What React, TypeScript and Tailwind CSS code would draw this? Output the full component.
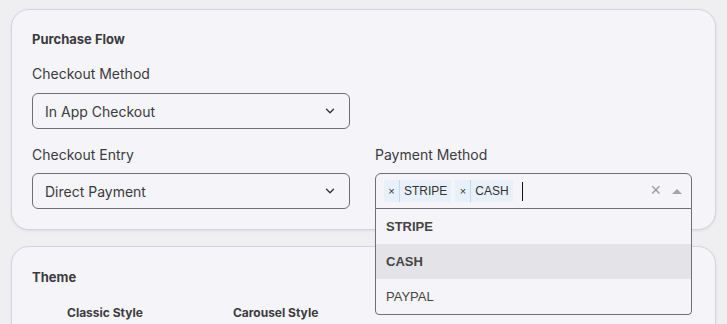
import React from "react";
import { ChevronDown } from "lucide-react";

const font = { fontFamily: "Inter, 'Noto Sans', sans-serif" };

function Select({ value }: { value: string }) {
	return (
		<div className="flex h-[36px] items-center justify-between rounded-[6px] border border-[#6f6e73] px-[12px] text-[14px] text-[#3b3b3f]">
			<span>{value}</span>
			<ChevronDown size={14} strokeWidth={2.2} className="text-[#333]" />
		</div>
	);
}

function Chip({ label }: { label: string }) {
	return (
		<div className="flex h-[22px] items-stretch bg-[#e8f1fa] text-[12px] text-[#333]">
			<span className="flex w-[16px] items-center justify-center border-r border-[#c2daf0] text-[11px]">×</span>
			<span className="flex items-center px-[4px]">{label}</span>
		</div>
	);
}

function PaymentSelect() {
	const options = [
		{ label: "STRIPE", bold: true, active: false },
		{ label: "CASH", bold: true, active: true },
		{ label: "PAYPAL", bold: false, active: false },
	];
	return (
		<div className="relative" style={{ fontFamily: "'Liberation Sans', Arial, sans-serif" }}>
			<div className="flex h-[36px] items-center rounded-t-[6px] border border-[#6f6e73] pl-[8px] pr-[9px]">
				<div className="flex items-center gap-[4px]">
					<Chip label="STRIPE" />
					<Chip label="CASH" />
				</div>
				<span className="ml-[9px] h-[19px] w-px bg-[#111]" />
				<span className="ml-auto -mt-[3px] text-[18px] leading-none text-[#9a9a9e]">×</span>
				<span className="ml-[11px] h-0 w-0 border-x-[5px] border-b-[5px] border-x-transparent border-b-[#a5a5a9]" />
			</div>
			<div className="absolute left-0 right-0 top-[35px] z-10 rounded-b-[4px] border border-[#6f6e73] bg-[#f5f4f8]">
				{options.map((o) => (
					<div
						key={o.label}
						className={`flex h-[35px] items-center px-[10px] text-[13px] text-[#444] ${o.bold ? "font-bold" : ""} ${o.active ? "bg-[#e4e3e7]" : ""}`}
					>
						{o.label}
					</div>
				))}
			</div>
		</div>
	);
}

export default function App() {
	return (
		<div className="h-screen overflow-hidden bg-[#efeef0] px-[11px] pt-[9px]" style={font}>
			{/* Purchase flow */}
			<div className="rounded-[18px] border border-[#d5d4d8] bg-[#f5f4f8] px-5 pt-[19px] pb-[20px] shadow-[0_1px_3px_rgba(0,0,0,0.08)]">
				<h2 className="text-[13px] leading-5 font-bold text-[#3b3b3f]">Purchase Flow</h2>
				<div className="mt-[15px] text-[14px] leading-5 text-[#3b3b3f]">Checkout Method</div>
				<div className="mt-[9px] w-[318px]">
					<Select value="In App Checkout" />
				</div>
				<div className="mt-[16px] grid grid-cols-[318px_317px] gap-x-[25px]">
					<div>
						<div className="text-[14px] leading-5 text-[#3b3b3f]">Checkout Entry</div>
						<div className="mt-[8px]">
							<Select value="Direct Payment" />
						</div>
					</div>
					<div>
						<div className="text-[14px] leading-5 text-[#3b3b3f]">Payment Method</div>
						<div className="mt-[8px]">
							<PaymentSelect />
						</div>
					</div>
				</div>
			</div>

			{/* Theme */}
			<div className="mt-[16px] h-[120px] rounded-[18px] border border-[#d5d4d8] bg-[#f5f4f8] px-5 pt-[20px] shadow-[0_1px_3px_rgba(0,0,0,0.08)]">
				<h2 className="text-[13px] leading-5 font-bold text-[#3b3b3f]">Theme</h2>
				<div className="mt-[16px] flex gap-[90px] pl-[35px] text-[12px] leading-5 font-bold text-[#3b3b3f]">
					<span>Classic Style</span>
					<span>Carousel Style</span>
				</div>
			</div>
		</div>
	);
}
